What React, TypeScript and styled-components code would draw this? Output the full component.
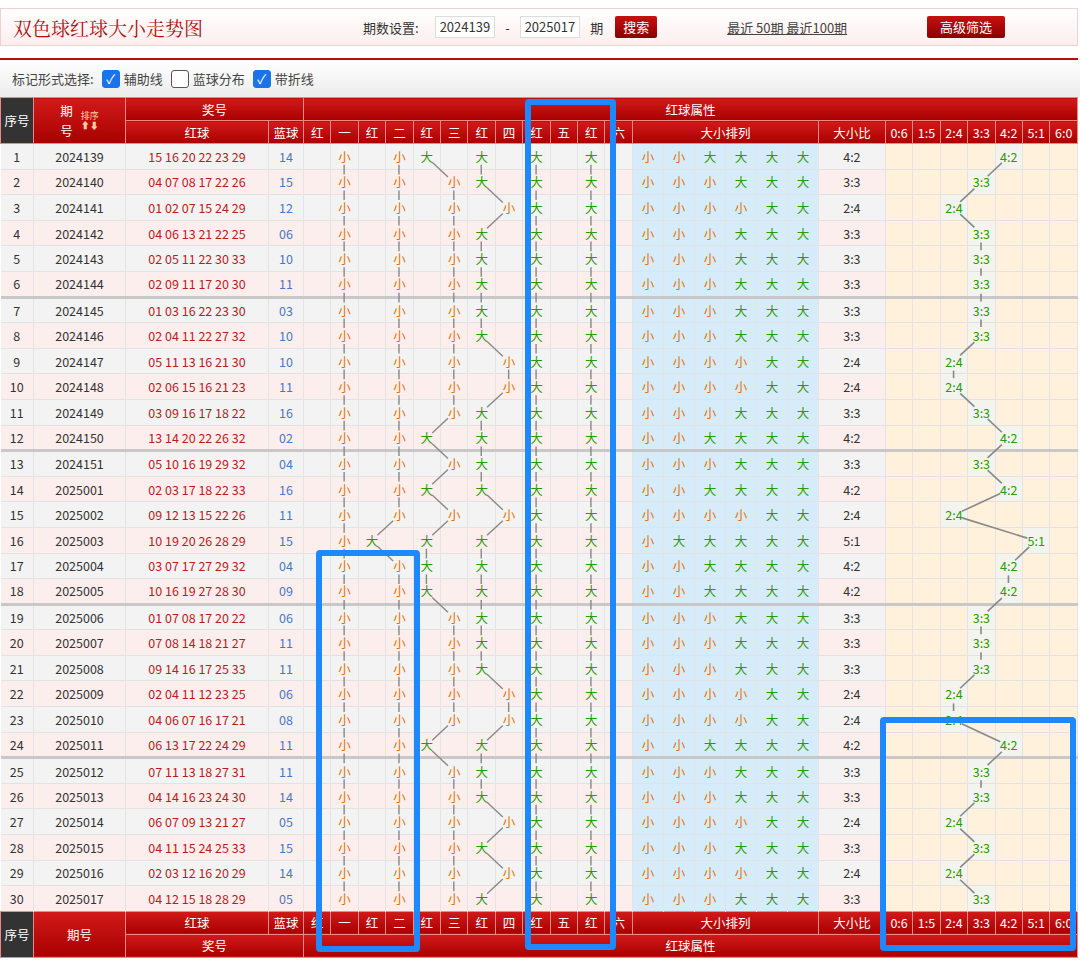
import React from "react";
import styled, { createGlobalStyle } from "styled-components";

const G = createGlobalStyle`
  body{margin:0;background:#fff;font-family:"Noto Sans CJK SC","Noto Sans",sans-serif;}
`;

const raw = `2024139 15 16 20 22 23 29 14
2024140 04 07 08 17 22 26 15
2024141 01 02 07 15 24 29 12
2024142 04 06 13 21 22 25 06
2024143 02 05 11 22 30 33 10
2024144 02 09 11 17 20 30 11
2024145 01 03 16 22 23 30 03
2024146 02 04 11 22 27 32 10
2024147 05 11 13 16 21 30 10
2024148 02 06 15 16 21 23 11
2024149 03 09 16 17 18 22 16
2024150 13 14 20 22 26 32 02
2024151 05 10 16 19 29 32 04
2025001 02 03 17 18 22 33 16
2025002 09 12 13 15 22 26 11
2025003 10 19 20 26 28 29 15
2025004 03 07 17 27 29 32 04
2025005 10 16 19 27 28 30 09
2025006 01 07 08 17 20 22 06
2025007 07 08 14 18 21 27 11
2025008 09 14 16 17 25 33 11
2025009 02 04 11 12 23 25 06
2025010 04 06 07 16 17 21 08
2025011 06 13 17 22 24 29 11
2025012 07 11 13 18 27 31 11
2025013 04 14 16 23 24 30 14
2025014 06 07 09 13 21 27 05
2025015 04 11 15 24 25 33 15
2025016 02 03 12 16 20 29 14
2025017 04 12 15 18 28 29 05`;

const rows = raw.split("\n").map((l) => {
  const p = l.trim().split(" ");
  const reds = p.slice(1, 7);
  const big = reds.map((r) => parseInt(r) >= 17);
  return { id: p[0], reds, blue: p[7], big, nb: big.filter(Boolean).length };
});

const RH = 25.6;
const HEAD = 47;
const PC = 27.42;
const RC = 27.43;
const ratios = ["0:6", "1:5", "2:4", "3:3", "4:2", "5:1", "6:0"];
const posLabels = ["红", "一", "红", "二", "红", "三", "红", "四", "红", "五", "红", "六"];

const Top = styled.div`
  margin: 8px 2px 0 0;
  height: 36px;
  border: 1px solid #f0d0d0;
  background: linear-gradient(#fff, #fdeeee);
  display: flex;
  align-items: center;
  padding: 0 12px;
  font-size: 13px;
  color: #333;
`;
const Title = styled.div`
  font-size: 19px;
  color: #b01010;
  width: 350px;
  font-family: "Noto Serif CJK SC","Noto Sans CJK SC",serif;
`;
const Inp = styled.span`
  border: 1px solid #ddd;
  background: #fff;
  padding: 0 4px;
  height: 20px;
  line-height: 20px;
  margin: 0 10px;
  font-size: 13px;
`;
const Btn = styled.span<{ w?: number }>`
  background: linear-gradient(#c81010, #8c0000);
  color: #fff;
  padding: 0 8px;
  height: 22px;
  line-height: 22px;
  font-size: 13px;
  text-align: center;
  width: ${(p) => (p.w ? p.w + "px" : "auto")};
  border-radius: 2px;
`;
const Links = styled.span`
  margin: 0 80px 0 70px;
  text-decoration: underline;
  color: #444;
`;
const RedLine = styled.div`
  margin-top: 12px;
  height: 2px;
  background: #b01010;
  margin-right: 2px;
`;
const Tool = styled.div`
  height: 37px;
  display: flex;
  align-items: center;
  gap: 4px;
  padding-left: 12px;
  font-size: 13px;
  color: #444;
  background: linear-gradient(#fff, #ececec);
`;
const Box = styled.span<{ on?: boolean }>`
  width: 16px;
  height: 16px;
  border-radius: 3px;
  border: 1px solid ${(p) => (p.on ? "#1a73e8" : "#555")};
  background: ${(p) => (p.on ? "#1a73e8" : "#fff")};
  color: #fff;
  font-size: 13px;
  line-height: 16px;
  text-align: center;
  margin-left: 4px;
`;
const Wrap = styled.div`
  position: relative;
  width: 1077px;
`;
const Table = styled.table`
  border-collapse: collapse;
  table-layout: fixed;
  width: 1077px;
  font-size: 13px;
`;
const H = styled.th<{ dark?: boolean }>`
  background: ${(p) => (p.dark ? "#333" : "linear-gradient(#d21a1a,#a80000)")};
  color: #fff;
  font-weight: normal;
  border: 1px solid #e88;
  height: 22px;
  padding: 0;
  font-size: 12.5px;
  white-space: nowrap;
  overflow: hidden;
`;
const Tr = styled.tr<{ alt: boolean; sep: boolean }>`
  height: ${RH}px;
  background: ${(p) => (p.alt ? "#fdeeee" : "#f3f3f3")};
  border-bottom: ${(p) => (p.sep ? "3px solid #c8c8c8" : "1px solid #e2e2e2")};
`;
const Td = styled.td<{ c?: string; bg?: string }>`
  padding: 0;
  text-align: center;
  border-right: 1px solid #e4e4e4;
  color: ${(p) => p.c || "#333"};
  background: ${(p) => p.bg || "transparent"};
  white-space: nowrap;
  overflow: hidden;
  font-size: 12.5px;
`;
const Svg = styled.svg`
  position: absolute;
  left: 0;
  top: ${HEAD}px;
  pointer-events: none;
`;
const Mark = styled.div<{ l: number; t: number; w: number; h: number }>`
  position: absolute;
  left: ${(p) => p.l}px;
  top: ${(p) => p.t}px;
  width: ${(p) => p.w}px;
  height: ${(p) => p.h}px;
  border: 6px solid #1e88ff;
  border-radius: 4px;
  box-sizing: border-box;
  pointer-events: none;
`;
const Arrows = styled.span`
  color: #ffd0a0;
  font-size: 9px;
  line-height: 10px;
  display: inline-block;
  vertical-align: middle;
  margin-left: 8px;
`;
const PeriodLabel = styled.span`
  display: inline-block;
  vertical-align: middle;
  line-height: 20px;
`;

const S = "#e07000";
const B = "#2a9a00";

function seg(x1: number, y1: number, x2: number, y2: number, g: number) {
  const dx = x2 - x1, dy = y2 - y1;
  const L = Math.hypot(dx, dy);
  const ux = dx / L, uy = dy / L;
  return { x1: x1 + ux * g, y1: y1 + uy * g, x2: x2 - ux * g, y2: y2 - uy * g };
}

export default function App() {
  const lines: React.ReactElement[] = [];
  for (let p = 0; p < 6; p++) {
    for (let i = 0; i < rows.length - 1; i++) {
      const c1 = p * 2 + (rows[i].big[p] ? 0 : 1);
      const c2 = p * 2 + (rows[i + 1].big[p] ? 0 : 1);
      const s = seg(303 + (c1 + 0.5) * PC, (i + 0.5) * RH, 303 + (c2 + 0.5) * PC, (i + 1.5) * RH, 8);
      lines.push(<line key={`p${p}-${i}`} {...s} stroke="#888" strokeWidth={1.4} />);
    }
  }
  for (let i = 0; i < rows.length - 1; i++) {
    const s = seg(885 + (rows[i].nb + 0.5) * RC, (i + 0.5) * RH, 885 + (rows[i + 1].nb + 0.5) * RC, (i + 1.5) * RH, 9);
    lines.push(<line key={`r${i}`} {...s} stroke="#888" strokeWidth={1.6} />);
  }
  const cols = (
    <colgroup>
      <col style={{ width: 33 }} />
      <col style={{ width: 92 }} />
      <col style={{ width: 143 }} />
      <col style={{ width: 35 }} />
      {posLabels.map((_, i) => <col key={i} style={{ width: PC }} />)}
      {[0, 1, 2, 3, 4, 5].map((i) => <col key={"d" + i} style={{ width: 31 }} />)}
      <col style={{ width: 67 }} />
      {ratios.map((r) => <col key={r} style={{ width: RC }} />)}
    </colgroup>
  );
  const subRow = (
    <>
      {posLabels.map((l, i) => <H key={i}>{l}</H>)}
      <H colSpan={6}>大小排列</H>
      <H>大小比</H>
      {ratios.map((r) => <H key={r}>{r}</H>)}
    </>
  );
  return (
    <>
      <G />
      <Top>
        <Title>双色球红球大小走势图</Title>
        <span>期数设置:</span>
        <Inp style={{ marginLeft: 16 }}>2024139</Inp>-<Inp>2025017</Inp>
        <span style={{ marginRight: 12 }}>期</span>
        <Btn>搜索</Btn>
        <Links>最近 50期 最近100期</Links>
        <Btn w={62}>高级筛选</Btn>
      </Top>
      <RedLine />
      <Tool>
        标记形式选择:<Box on>✓</Box>辅助线<Box />蓝球分布<Box on>✓</Box>带折线
      </Tool>
      <Wrap>
        <Table>
          {cols}
          <thead>
            <tr>
              <H dark rowSpan={2}>序号</H>
              <H rowSpan={2}>
                <PeriodLabel>期<br />号</PeriodLabel>
                <Arrows>排序<br />⬆⬇</Arrows>
              </H>
              <H colSpan={2}>奖号</H>
              <H colSpan={26}>红球属性</H>
            </tr>
            <tr>
              <H>红球</H>
              <H>蓝球</H>
              {subRow}
            </tr>
          </thead>
          <tbody>
            {rows.map((r, i) => (
              <Tr key={r.id} alt={i % 2 === 1} sep={i % 6 === 5 && i < 29}>
                <Td>{i + 1}</Td>
                <Td>{r.id}</Td>
                <Td c="#b81c1c">{r.reds.join(" ")}</Td>
                <Td c="#4a78c0">{r.blue}</Td>
                {posLabels.map((_, c) => {
                  const p = Math.floor(c / 2);
                  const isBig = c % 2 === 0;
                  const show = r.big[p] === isBig;
                  return <Td key={c} c={isBig ? B : S}>{show ? (isBig ? "大" : "小") : ""}</Td>;
                })}
                {r.big.map((b, k) => (
                  <Td key={"d" + k} bg="#d7ecfa" c={b ? B : S}>{b ? "大" : "小"}</Td>
                ))}
                <Td>{`${r.nb}:${6 - r.nb}`}</Td>
                {ratios.map((x, k) => (
                  <Td key={x} bg={k === r.nb ? "#f4f4ee" : "#fff1dc"} c={B}>{k === r.nb ? x : ""}</Td>
                ))}
              </Tr>
            ))}
          </tbody>
          <tfoot>
            <tr>
              <H dark rowSpan={2}>序号</H>
              <H rowSpan={2}>期号</H>
              <H>红球</H>
              <H>蓝球</H>
              {subRow}
            </tr>
            <tr>
              <H colSpan={2}>奖号</H>
              <H colSpan={26}>红球属性</H>
            </tr>
          </tfoot>
        </Table>
        <Svg width={1077} height={RH * 30}>{lines}</Svg>
        <Mark l={316} t={453} w={104} h={402} />
        <Mark l={525} t={2} w={91} h={851} />
        <Mark l={880} t={620} w={196} h={234} />
      </Wrap>
    </>
  );
}
